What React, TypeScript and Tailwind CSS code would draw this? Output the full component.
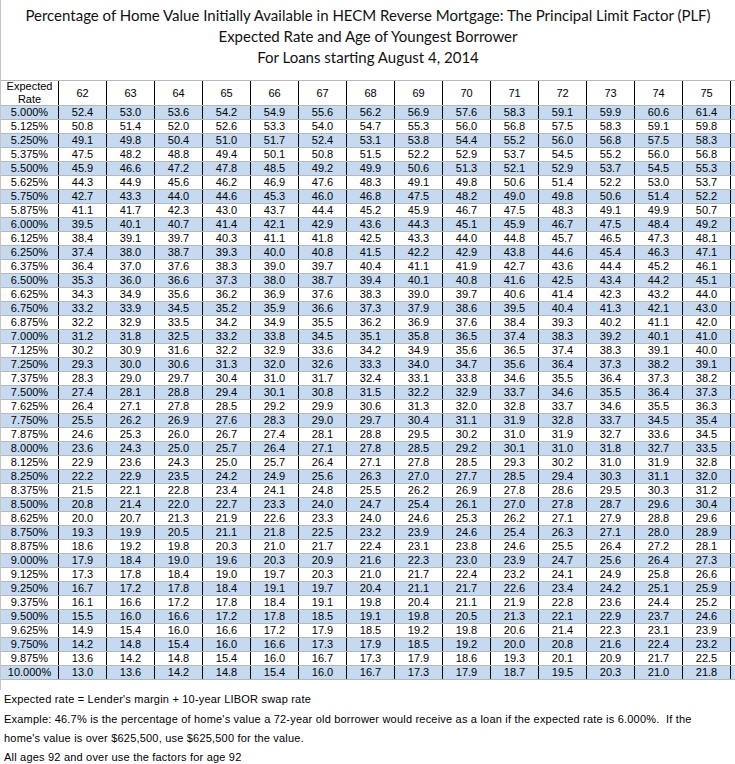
import React from "react";

const ages = [62, 63, 64, 65, 66, 67, 68, 69, 70, 71, 72, 73, 74, 75];

const raw = `5.000%|52.4 53.0 53.6 54.2 54.9 55.6 56.2 56.9 57.6 58.3 59.1 59.9 60.6 61.4
5.125%|50.8 51.4 52.0 52.6 53.3 54.0 54.7 55.3 56.0 56.8 57.5 58.3 59.1 59.8
5.250%|49.1 49.8 50.4 51.0 51.7 52.4 53.1 53.8 54.4 55.2 56.0 56.8 57.5 58.3
5.375%|47.5 48.2 48.8 49.4 50.1 50.8 51.5 52.2 52.9 53.7 54.5 55.2 56.0 56.8
5.500%|45.9 46.6 47.2 47.8 48.5 49.2 49.9 50.6 51.3 52.1 52.9 53.7 54.5 55.3
5.625%|44.3 44.9 45.6 46.2 46.9 47.6 48.3 49.1 49.8 50.6 51.4 52.2 53.0 53.7
5.750%|42.7 43.3 44.0 44.6 45.3 46.0 46.8 47.5 48.2 49.0 49.8 50.6 51.4 52.2
5.875%|41.1 41.7 42.3 43.0 43.7 44.4 45.2 45.9 46.7 47.5 48.3 49.1 49.9 50.7
6.000%|39.5 40.1 40.7 41.4 42.1 42.9 43.6 44.3 45.1 45.9 46.7 47.5 48.4 49.2
6.125%|38.4 39.1 39.7 40.3 41.1 41.8 42.5 43.3 44.0 44.8 45.7 46.5 47.3 48.1
6.250%|37.4 38.0 38.7 39.3 40.0 40.8 41.5 42.2 42.9 43.8 44.6 45.4 46.3 47.1
6.375%|36.4 37.0 37.6 38.3 39.0 39.7 40.4 41.1 41.9 42.7 43.6 44.4 45.2 46.1
6.500%|35.3 36.0 36.6 37.3 38.0 38.7 39.4 40.1 40.8 41.6 42.5 43.4 44.2 45.1
6.625%|34.3 34.9 35.6 36.2 36.9 37.6 38.3 39.0 39.7 40.6 41.4 42.3 43.2 44.0
6.750%|33.2 33.9 34.5 35.2 35.9 36.6 37.3 37.9 38.6 39.5 40.4 41.3 42.1 43.0
6.875%|32.2 32.9 33.5 34.2 34.9 35.5 36.2 36.9 37.6 38.4 39.3 40.2 41.1 42.0
7.000%|31.2 31.8 32.5 33.2 33.8 34.5 35.1 35.8 36.5 37.4 38.3 39.2 40.1 41.0
7.125%|30.2 30.9 31.6 32.2 32.9 33.6 34.2 34.9 35.6 36.5 37.4 38.3 39.1 40.0
7.250%|29.3 30.0 30.6 31.3 32.0 32.6 33.3 34.0 34.7 35.6 36.4 37.3 38.2 39.1
7.375%|28.3 29.0 29.7 30.4 31.0 31.7 32.4 33.1 33.8 34.6 35.5 36.4 37.3 38.2
7.500%|27.4 28.1 28.8 29.4 30.1 30.8 31.5 32.2 32.9 33.7 34.6 35.5 36.4 37.3
7.625%|26.4 27.1 27.8 28.5 29.2 29.9 30.6 31.3 32.0 32.8 33.7 34.6 35.5 36.3
7.750%|25.5 26.2 26.9 27.6 28.3 29.0 29.7 30.4 31.1 31.9 32.8 33.7 34.5 35.4
7.875%|24.6 25.3 26.0 26.7 27.4 28.1 28.8 29.5 30.2 31.0 31.9 32.7 33.6 34.5
8.000%|23.6 24.3 25.0 25.7 26.4 27.1 27.8 28.5 29.2 30.1 31.0 31.8 32.7 33.5
8.125%|22.9 23.6 24.3 25.0 25.7 26.4 27.1 27.8 28.5 29.3 30.2 31.0 31.9 32.8
8.250%|22.2 22.9 23.5 24.2 24.9 25.6 26.3 27.0 27.7 28.5 29.4 30.3 31.1 32.0
8.375%|21.5 22.1 22.8 23.4 24.1 24.8 25.5 26.2 26.9 27.8 28.6 29.5 30.3 31.2
8.500%|20.8 21.4 22.0 22.7 23.3 24.0 24.7 25.4 26.1 27.0 27.8 28.7 29.6 30.4
8.625%|20.0 20.7 21.3 21.9 22.6 23.3 24.0 24.6 25.3 26.2 27.1 27.9 28.8 29.6
8.750%|19.3 19.9 20.5 21.1 21.8 22.5 23.2 23.9 24.6 25.4 26.3 27.1 28.0 28.9
8.875%|18.6 19.2 19.8 20.3 21.0 21.7 22.4 23.1 23.8 24.6 25.5 26.4 27.2 28.1
9.000%|17.9 18.4 19.0 19.6 20.3 20.9 21.6 22.3 23.0 23.9 24.7 25.6 26.4 27.3
9.125%|17.3 17.8 18.4 19.0 19.7 20.3 21.0 21.7 22.4 23.2 24.1 24.9 25.8 26.6
9.250%|16.7 17.2 17.8 18.4 19.1 19.7 20.4 21.1 21.7 22.6 23.4 24.2 25.1 25.9
9.375%|16.1 16.6 17.2 17.8 18.4 19.1 19.8 20.4 21.1 21.9 22.8 23.6 24.4 25.2
9.500%|15.5 16.0 16.6 17.2 17.8 18.5 19.1 19.8 20.5 21.3 22.1 22.9 23.7 24.6
9.625%|14.9 15.4 16.0 16.6 17.2 17.9 18.5 19.2 19.8 20.6 21.4 22.3 23.1 23.9
9.750%|14.2 14.8 15.4 16.0 16.6 17.3 17.9 18.5 19.2 20.0 20.8 21.6 22.4 23.2
9.875%|13.6 14.2 14.8 15.4 16.0 16.7 17.3 17.9 18.6 19.3 20.1 20.9 21.7 22.5
10.000%|13.0 13.6 14.2 14.8 15.4 16.0 16.7 17.3 17.9 18.7 19.5 20.3 21.0 21.8`;

const rows = raw.split("\n").map((line) => {
  const [rate, vals] = line.split("|");
  return { rate, vals: vals.split(" ") };
});

const tableFont = { fontFamily: '"Liberation Sans", Arial, sans-serif' };

export default function App() {
  return (
    <div className="w-[735px] h-[764px] overflow-hidden bg-white text-black" style={tableFont}>
      <div className="border-l border-[#c4c4c4] pb-[10px]">
        <div
          className="h-[80px] pt-[5px] text-center text-[15px] leading-[21px] text-[#111]"
          style={{ fontFamily: 'Lato, "Open Sans", sans-serif' }}
        >
          <div>Percentage of Home Value Initially Available in HECM Reverse Mortgage: The Principal Limit Factor (PLF)</div>
          <div>Expected Rate and Age of Youngest Borrower</div>
          <div>For Loans starting August 4, 2014</div>
        </div>
        <div className="border-t border-[#b8b8b8] text-[11px]">
          <div className="grid grid-cols-[58px_repeat(14,48px)] border-b border-[#b8b8b8]">
            <div className="h-[24px] border-r border-black flex flex-col items-center justify-center leading-[13px]">
              <span>Expected</span>
              <span>Rate</span>
            </div>
            {ages.map((a) => (
              <div key={a} className="h-[24px] border-r border-black flex items-center justify-center">
                {a}
              </div>
            ))}
          </div>
          {rows.map((r, i) => (
            <div
              key={r.rate}
              className={
                "grid grid-cols-[58px_repeat(14,48px)] border-b border-[#b8b8b8] " +
                (i % 2 === 0 ? "bg-[#c5d9f1]" : "bg-white")
              }
            >
              <div className="h-[13px] leading-[13px] border-r border-black text-center">{r.rate}</div>
              {r.vals.map((v, j) => (
                <div key={j} className="h-[13px] leading-[13px] border-r border-black text-center">
                  {v}
                </div>
              ))}
            </div>
          ))}
        </div>
      </div>
      <div className="pl-[4px] text-[11px] leading-[19px] tracking-[0.2px]">
        <p className="mb-px">Expected rate = Lender's margin + 10-year LIBOR swap rate</p>
        <p>
          Example: 46.7% is the percentage of home's value a 72-year old borrower would receive as a loan if the expected rate is 6.000%.&nbsp; If the
          <br />
          home's value is over $625,500, use $625,500 for the value.
        </p>
        <p className="leading-[18px]">All ages 92 and over use the factors for age 92</p>
      </div>
    </div>
  );
}
